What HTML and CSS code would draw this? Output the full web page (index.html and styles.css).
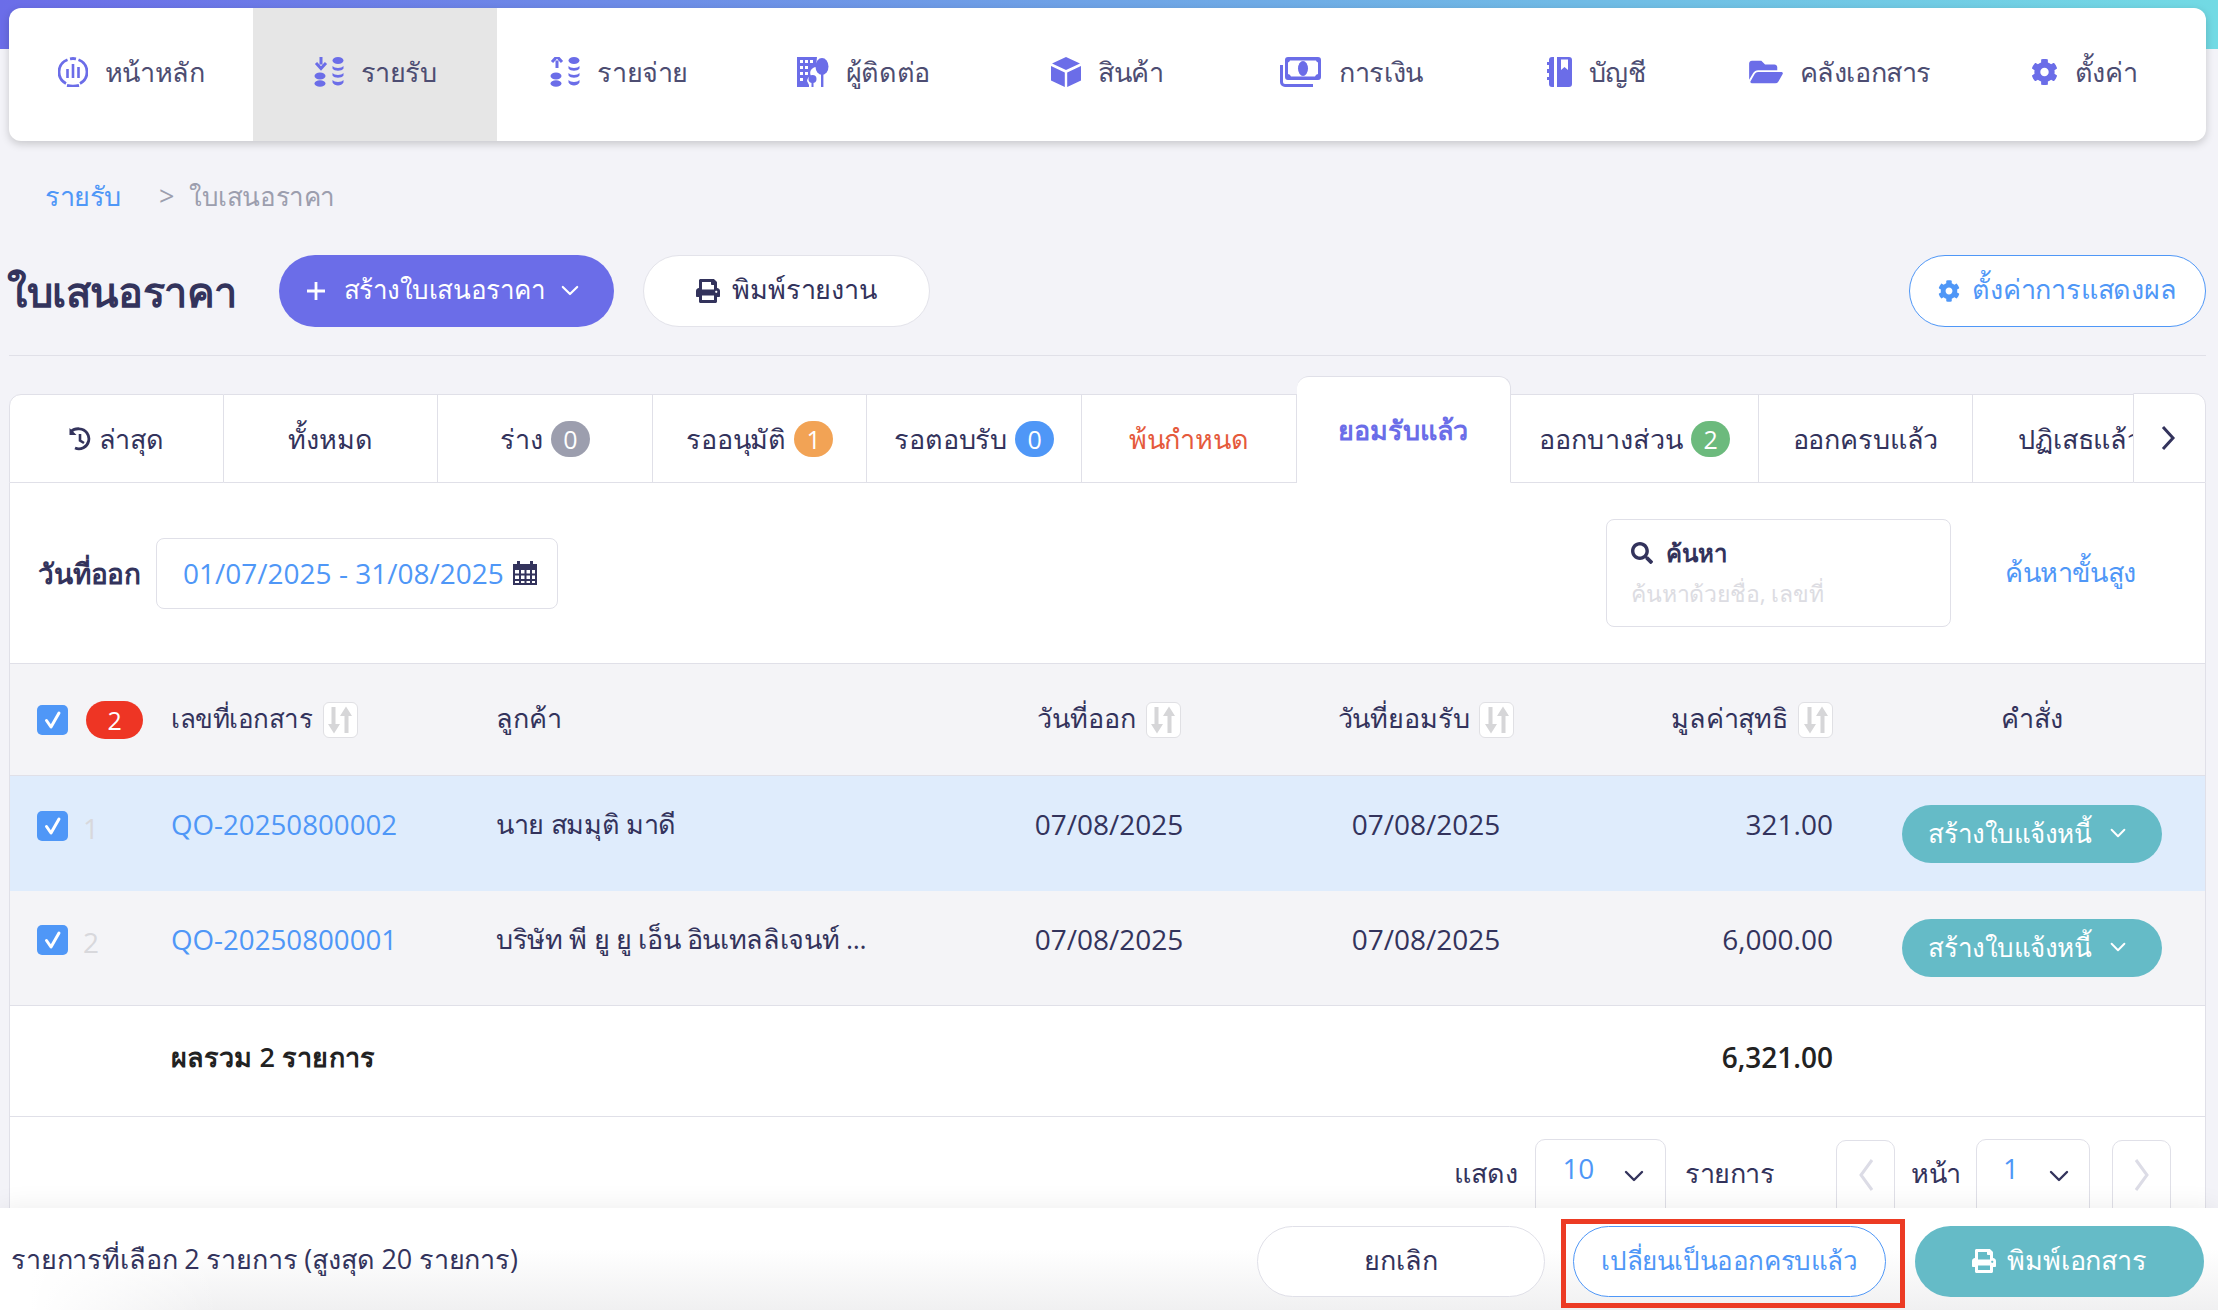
FILE: index.html
```html
<!DOCTYPE html>
<html lang="th">
<head>
<meta charset="utf-8">
<title>ใบเสนอราคา</title>
<link rel="stylesheet" href="styles.css">
</head>
<body>
<svg class="sprite" aria-hidden="true">
  <symbol id="i-cog" viewBox="0 0 512 512"><path d="M487.4 315.7l-42.6-24.6c4.3-23.2 4.3-47 0-70.2l42.6-24.6c4.9-2.8 7.1-8.6 5.5-14-11.1-35.6-30-67.8-54.7-94.6-3.8-4.1-10-5.1-14.8-2.3L380.8 110c-17.9-15.4-38.5-27.3-60.8-35.1V25.8c0-5.6-3.9-10.5-9.4-11.7-36.7-8.2-74.3-7.8-109.2 0-5.5 1.2-9.4 6.1-9.4 11.7V75c-22.2 7.9-42.8 19.8-60.8 35.1L88.7 85.5c-4.9-2.8-11-1.9-14.8 2.3-24.7 26.7-43.6 58.9-54.7 94.6-1.7 5.4.6 11.2 5.5 14L67.3 221c-4.3 23.2-4.3 47 0 70.2l-42.6 24.6c-4.9 2.8-7.1 8.6-5.5 14 11.1 35.6 30 67.8 54.7 94.6 3.8 4.1 10 5.1 14.8 2.3l42.6-24.6c17.9 15.4 38.5 27.3 60.8 35.1v49.2c0 5.6 3.9 10.5 9.4 11.7 36.7 8.2 74.3 7.8 109.2 0 5.5-1.2 9.4-6.1 9.4-11.7v-49.2c22.2-7.9 42.8-19.8 60.8-35.1l42.6 24.6c4.9 2.8 11 1.9 14.8-2.3 24.7-26.7 43.6-58.9 54.7-94.6 1.5-5.5-.7-11.3-5.6-14.1zM256 336c-44.1 0-80-35.9-80-80s35.9-80 80-80 80 35.9 80 80-35.9 80-80 80z"/></symbol>
  <symbol id="i-print" viewBox="0 0 512 512"><path d="M448 192V77.25c0-8.49-3.37-16.62-9.37-22.63L393.37 9.37c-6-6-14.14-9.37-22.63-9.37H96C78.33 0 64 14.33 64 32v160c-35.35 0-64 28.65-64 64v112c0 8.84 7.16 16 16 16h48v96c0 17.67 14.33 32 32 32h320c17.67 0 32-14.33 32-32v-96h48c8.84 0 16-7.16 16-16V256c0-35.35-28.65-64-64-64zm-64 256H128v-96h256v96zm0-224H128V64h192v48c0 8.84 7.16 16 16 16h48v96zm48 72c-13.25 0-24-10.75-24-24 0-13.26 10.75-24 24-24s24 10.74 24 24c0 13.25-10.75 24-24 24z"/></symbol>
  <symbol id="i-chev" viewBox="0 0 20 12"><path d="M2 2l8 8 8-8" fill="none" stroke="currentColor" stroke-width="2.4" stroke-linecap="round" stroke-linejoin="round"/></symbol>
  <symbol id="i-sort" viewBox="0 0 24 28"><path d="M7.500 1v17H12l-6 9.500L0 18h3.500V1zM16.500 27V10H12l6-9.500L24 10h-3.500v17z" fill="#d6d6d8"/></symbol>
  <symbol id="i-check" viewBox="0 0 31 30"><path d="M9.500 15.500l4.500 6.500 8-14" fill="none" stroke="#fff" stroke-width="3" stroke-linecap="round" stroke-linejoin="round"/></symbol>
  <symbol id="i-flow" viewBox="0 0 30 30"><path d="M7 0v7.500M2 6l5 5.500L12 6" fill="none" stroke="currentColor" stroke-width="3"/><g fill="currentColor"><ellipse cx="24" cy="3.500" rx="5.500" ry="3.500"/><ellipse cx="6" cy="19" rx="5.500" ry="3.500"/><ellipse cx="6" cy="26.500" rx="5.500" ry="3.200"/><path d="M18.500 9c2 2.500 9 2.500 11 0v2.500c-2 3-9 3-11 0zM18.500 16c2 2.500 9 2.500 11 0v2.500c-2 3-9 3-11 0zM18.500 23c2 2.500 9 2.500 11 0v2.500c-2 4-9 4-11 0z"/></g></symbol>
  <symbol id="i-flow-up" viewBox="0 0 30 30"><path d="M7 11V3.500M2 5l5-5.500L12 5" fill="none" stroke="currentColor" stroke-width="3"/><g fill="currentColor"><ellipse cx="24" cy="3.500" rx="5.500" ry="3.500"/><ellipse cx="6" cy="19" rx="5.500" ry="3.500"/><ellipse cx="6" cy="26.500" rx="5.500" ry="3.200"/><path d="M18.500 9c2 2.500 9 2.500 11 0v2.500c-2 3-9 3-11 0zM18.500 16c2 2.500 9 2.500 11 0v2.500c-2 3-9 3-11 0zM18.500 23c2 2.500 9 2.500 11 0v2.500c-2 4-9 4-11 0z"/></g></symbol>
</svg>

<div class="page">
  <header class="head">
    <nav class="nav">
      <a class="nav-item"><svg class="ico" width="30" height="30" viewBox="0 0 30 30"><path d="M9.500 2.800A13 13 0 0 0 8 26.500M22 26.500A13 13 0 0 0 20.500 2.800" fill="none" stroke="currentColor" stroke-width="2.800"/><path d="M9 28.300c4 1 8 1 12 0M12 1.800c2-.4 4-.4 6 0" fill="none" stroke="currentColor" stroke-width="2.800"/><path d="M9.500 12v9M15 7v14M20.500 10v11" stroke="currentColor" stroke-width="2.600"/></svg><span>หน้าหลัก</span></a>
      <a class="nav-item is-active"><svg class="ico" width="30" height="30"><use href="#i-flow"/></svg><span>รายรับ</span></a>
      <a class="nav-item"><svg class="ico" width="30" height="30"><use href="#i-flow-up"/></svg><span>รายจ่าย</span></a>
      <a class="nav-item"><svg class="ico" width="32" height="30" viewBox="0 0 32 30"><path fill="currentColor" fill-rule="evenodd" d="M0 0h20l-1 10a6 6 0 0 0-5 9 6 6 0 0 0-4 5l2 4v2H0zM3 3v3h3V3zm5 0v3h3V3zm5 0v3h3V3zM3 9v3h3V9zm5 0v3h3V9zM3 15v3h3v-3zm5 0v3h3v-3zM3 21v3h3v-3z"/><ellipse cx="25" cy="9.500" rx="6.500" ry="8.500" fill="currentColor"/><rect x="24" y="12" width="2.400" height="18" fill="currentColor"/><circle cx="15.500" cy="22" r="4" fill="currentColor"/><rect x="14.500" y="22" width="2" height="8" fill="currentColor"/></svg><span>ผู้ติดต่อ</span></a>
      <a class="nav-item"><svg class="ico" width="30" height="30" viewBox="0 0 30 30"><path fill="currentColor" d="M15 0l14 6.500L15 13 1 6.500zM0 9l13.800 6.500V30L0 23.500zM30 9l-13.800 6.500V30L30 23.500z"/></svg><span>สินค้า</span></a>
      <a class="nav-item"><svg class="ico" width="42" height="30" viewBox="0 0 42 30"><path fill="currentColor" fill-rule="evenodd" d="M8 0h30a3 3 0 0 1 3 3v17a3 3 0 0 1-3 3H8a3 3 0 0 1-3-3V3a3 3 0 0 1 3-3zm2 3.500a3 3 0 0 1-2 2V17a4 4 0 0 1 3 2.500h24a4 4 0 0 1 3-2.500V5.500a3 3 0 0 1-2-2z"/><ellipse cx="23" cy="11.500" rx="5" ry="7.500" fill="currentColor"/><path d="M1.500 8v17a3.500 3.500 0 0 0 3.500 3.500h28" fill="none" stroke="currentColor" stroke-width="3"/></svg><span>การเงิน</span></a>
      <a class="nav-item"><svg class="ico" width="26" height="30" viewBox="0 0 26 30"><path fill="currentColor" d="M11 0h12a3 3 0 0 1 3 3v24a3 3 0 0 1-3 3H11zM8 0v30H6a3 3 0 0 1-3-3v-4H1v-3h2v-4H1v-4h2V8H1V5h2V3a3 3 0 0 1 3-3z"/><path fill="#fff" d="M15 2.500h7V13l-3.500-3-3.500 3z"/></svg><span>บัญชี</span></a>
      <a class="nav-item"><svg class="ico" width="34" height="30" viewBox="0 0 576 512"><path fill="currentColor" d="M572.694 292.093L500.27 416.248A63.997 63.997 0 0 1 444.989 448H45.025c-18.523 0-30.064-20.093-20.731-36.093l72.424-124.155A64 64 0 0 1 152 256h399.964c18.523 0 30.064 20.093 20.73 36.093zM152 224h328v-48c0-26.51-21.49-48-48-48H272l-64-64H48C21.49 64 0 85.49 0 112v278.046l69.077-118.418C86.214 242.25 117.989 224 152 224z"/></svg><span>คลังเอกสาร</span></a>
      <a class="nav-item"><svg class="ico" width="27" height="30" fill="currentColor"><use href="#i-cog"/></svg><span>ตั้งค่า</span></a>
    </nav>
  </header>

  <div class="crumbs"><a class="crumb-link">รายรับ</a><span class="crumb-sep">&gt;</span><span class="crumb-cur">ใบเสนอราคา</span></div>

  <div class="title-row">
    <h1 class="title">ใบเสนอราคา</h1>
    <button class="btn btn-primary"><svg class="plus" width="20" height="20" viewBox="0 0 20 20"><path d="M10 1v18M1 10h18" stroke="#fff" stroke-width="2.800"/></svg><span>สร้างใบเสนอราคา</span><svg class="chev" width="18" height="11"><use href="#i-chev"/></svg></button>
    <button class="btn btn-plain"><svg width="24" height="24" fill="#33335c"><use href="#i-print"/></svg><span>พิมพ์รายงาน</span></button>
    <button class="btn btn-outline"><svg width="22" height="24" fill="#4f97f7"><use href="#i-cog"/></svg><span>ตั้งค่าการแสดงผล</span></button>
  </div>

  <section class="panel">
    <div class="tabs">
      <div class="tab-list">
        <a class="tab"><svg width="22" height="24" viewBox="0 0 22 24"><path d="M2 4.500C4 2.600 7 1.500 10.500 1.800A10 10 0 1 1 6 21" fill="none" stroke="#33335c" stroke-width="2.800"/><path d="M0.500 1v7h7" fill="#33335c"/><path d="M11 7v6.500l4 2.500" fill="none" stroke="#33335c" stroke-width="2.600"/></svg><span>ล่าสุด</span></a>
        <a class="tab"><span>ทั้งหมด</span></a>
        <a class="tab"><span>ร่าง</span><i class="pill pill-gray">0</i></a>
        <a class="tab"><span>รออนุมัติ</span><i class="pill pill-orange">1</i></a>
        <a class="tab"><span>รอตอบรับ</span><i class="pill pill-blue">0</i></a>
        <a class="tab tab-danger"><span>พ้นกำหนด</span></a>
        <a class="tab tab-active"><span>ยอมรับแล้ว</span></a>
        <a class="tab tab-wide"><span>ออกบางส่วน</span><i class="pill pill-green">2</i></a>
        <a class="tab"><span>ออกครบแล้ว</span></a>
        <a class="tab"><span>ปฏิเสธแล้ว</span></a>
      </div>
      <a class="tab-next"><svg width="16" height="26" viewBox="0 0 16 26"><path d="M3 2l10 11L3 24" fill="none" stroke="#33335c" stroke-width="3"/></svg></a>
    </div>

    <div class="filters">
      <label class="filter-label">วันที่ออก</label>
      <div class="date-box"><span>01/07/2025 - 31/08/2025</span><svg width="24" height="24" viewBox="0 0 24 24"><path fill="#33335c" fill-rule="evenodd" d="M0 3h4V0h3v3h10V0h3v3h4v21H0zM2 9v3.500h4V9zm6 0v3.500h3.500V9zm5.500 0v3.500H17V9zm5.500 0v3.500h3V9zM2 14.500V18h4v-3.500zm6 0V18h3.500v-3.500zm5.500 0V18H17v-3.500zm5.500 0V18h3v-3.500zM8 20v2h3.500v-2zm5.500 0v2H17v-2zM2 20v2h4v-2zm17 0v2h3v-2z"/></svg></div>
      <div class="search-box">
        <div class="search-head"><svg width="22" height="22" viewBox="0 0 512 512"><path fill="#33335c" d="M505 442.7L405.3 343c-4.500-4.500-10.600-7-17-7H372c27.600-35.300 44-79.700 44-128C416 93.100 322.900 0 208 0S0 93.100 0 208s93.100 208 208 208c48.300 0 92.700-16.400 128-44v16.300c0 6.400 2.500 12.500 7 17l99.700 99.700c9.400 9.400 24.600 9.400 33.900 0l28.300-28.300c9.400-9.400 9.400-24.600.1-34zM208 336c-70.700 0-128-57.200-128-128 0-70.700 57.200-128 128-128 70.700 0 128 57.200 128 128 0 70.700-57.200 128-128 128z"/></svg><b>ค้นหา</b></div>
        <div class="search-hint">ค้นหาด้วยชื่อ, เลขที่</div>
      </div>
      <a class="adv-link">ค้นหาขั้นสูง</a>
    </div>

    <div class="row row-head">
      <div class="cell-sel"><span class="check"><svg width="31" height="30"><use href="#i-check"/></svg></span><span class="count">2</span></div>
      <div class="th th-doc">เลขที่เอกสาร<span class="sort"><svg width="24" height="28"><use href="#i-sort"/></svg></span></div>
      <div class="th">ลูกค้า</div>
      <div class="th th-center">วันที่ออก<span class="sort"><svg width="24" height="28"><use href="#i-sort"/></svg></span></div>
      <div class="th th-center">วันที่ยอมรับ<span class="sort"><svg width="24" height="28"><use href="#i-sort"/></svg></span></div>
      <div class="th th-right">มูลค่าสุทธิ<span class="sort"><svg width="24" height="28"><use href="#i-sort"/></svg></span></div>
      <div class="th th-center th-cmd">คำสั่ง</div>
    </div>

    <div class="row row-selected">
      <div class="cell-sel cell-up"><span class="check"><svg width="31" height="30"><use href="#i-check"/></svg></span><span class="num">1</span></div>
      <div class="td td-link">QO-20250800002</div>
      <div class="td td-name">นาย สมมุติ มาดี</div>
      <div class="td td-center">07/08/2025</div>
      <div class="td td-center">07/08/2025</div>
      <div class="td td-right">321.00</div>
      <div class="cmd"><button class="btn-row"><span>สร้างใบแจ้งหนี้</span><svg width="16" height="10"><use href="#i-chev"/></svg></button></div>
    </div>
    <div class="row row-plain">
      <div class="cell-sel cell-up"><span class="check"><svg width="31" height="30"><use href="#i-check"/></svg></span><span class="num">2</span></div>
      <div class="td td-link">QO-20250800001</div>
      <div class="td td-name">บริษัท พี ยู ยู เอ็น อินเทลลิเจนท์ ...</div>
      <div class="td td-center">07/08/2025</div>
      <div class="td td-center">07/08/2025</div>
      <div class="td td-right">6,000.00</div>
      <div class="cmd"><button class="btn-row"><span>สร้างใบแจ้งหนี้</span><svg width="16" height="10"><use href="#i-chev"/></svg></button></div>
    </div>
    <div class="row row-total">
      <div></div>
      <div class="total-label">ผลรวม 2 รายการ</div>
      <div></div><div></div><div></div>
      <div class="total-value">6,321.00</div>
      <div></div>
    </div>

    <div class="pager">
      <span class="pager-text">แสดง</span>
      <div class="select select-size"><span>10</span><svg width="20" height="12"><use href="#i-chev"/></svg></div>
      <span class="pager-text pager-items">รายการ</span>
      <a class="page-btn"><svg width="16" height="34" viewBox="0 0 16 34"><path d="M14 2L3 17l11 15" fill="none" stroke="#dcdce6" stroke-width="3"/></svg></a>
      <span class="pager-text pager-page">หน้า</span>
      <div class="select select-page"><span>1</span><svg width="20" height="12"><use href="#i-chev"/></svg></div>
      <a class="page-btn page-next"><svg width="16" height="34" viewBox="0 0 16 34"><path d="M2 2l11 15L2 32" fill="none" stroke="#dcdce6" stroke-width="3"/></svg></a>
    </div>
  </section>
</div>

<footer class="bar">
  <span class="bar-text">รายการที่เลือก 2 รายการ (สูงสุด 20 รายการ)</span>
  <button class="btn btn-cancel">ยกเลิก</button>
  <div class="convert-wrap">
    <button class="btn btn-convert">เปลี่ยนเป็นออกครบแล้ว</button>
    <span class="highlight"></span>
  </div>
  <button class="btn btn-teal"><svg width="24" height="24" fill="#fff"><use href="#i-print"/></svg><span>พิมพ์เอกสาร</span></button>
</footer>
</body>
</html>
```
FILE: styles.css
```css
* { box-sizing: border-box; }
html, body { margin: 0; padding: 0; }
body {
  width: 2218px;
  height: 1310px;
  overflow: hidden;
  display: flex;
  flex-direction: column;
  background: #f3f3f8;
  color: #33335c;
  font-family: "Open Sans", "Noto Sans", sans-serif;
  font-size: 27px;
  letter-spacing: -.15px;
  line-height: 40px;
}
.sprite { display: none; }
button { font: inherit; letter-spacing: inherit; cursor: pointer; }
i { font-style: normal; }
.page { flex: 1; min-height: 0; overflow: hidden; }

.head {
  padding: 8px 12px 0 9px;
  background: linear-gradient(90deg, #6b6de8, #72dae4) no-repeat;
  background-size: 100% 49px;
}
.nav {
  display: flex;
  height: 133px;
  background: #fff;
  border-radius: 12px;
  overflow: hidden;
  box-shadow: 0 3px 8px rgba(0, 0, 0, .18);
}
.nav-item {
  flex: 1;
  display: flex;
  align-items: center;
  justify-content: center;
  gap: 17px;
  padding-bottom: 5px;
  color: #4d4d72;
  letter-spacing: -.4px;
}
.nav-item .ico { color: #6b6de8; flex: none; }
.is-active { background: #e6e6e6; }

.crumbs { display: flex; align-items: center; margin: 35px 0 0 45px; height: 40px; letter-spacing: -.4px; }
.crumb-link { color: #4f97f7; }
.crumb-sep { color: #9c9eae; margin: 0 15px 0 38px; }
.crumb-cur { color: #9c9eae; font-size: 26px; }

.title-row {
  display: flex;
  align-items: center;
  margin: 39px 12px 0 9px;
  padding-bottom: 28px;
  border-bottom: 1px solid #e0e0e8;
}
.title { margin: 0 46px 0 -2px; font-size: 41.5px; line-height: 72px; font-weight: 600; width: 226px; white-space: nowrap; letter-spacing: -.4px; }
.btn {
  display: flex;
  align-items: center;
  justify-content: center;
  height: 72px;
  border-radius: 36px;
  border: 1px solid transparent;
  gap: 12px;
  padding: 0 0 4px;
  color: #33335c;
  background: #fff;
}
.btn svg { margin-top: 3px; }
.btn-primary { width: 335px; background: #6b6de8; color: #fff; margin-right: 29px; font-size: 26px; letter-spacing: -.45px; padding-right: 8px; gap: 14px; }
.btn-primary .plus { margin-right: 4px; }
.btn-primary .chev { color: #fff; margin-left: 2px; }
.btn-plain { width: 287px; border-color: #e3e3ea; }
.btn-outline { width: 297px; margin-left: auto; border-color: #4f97f7; color: #4f97f7; letter-spacing: -.2px; }

.panel {
  margin: 20px 12px 0 9px;
  background: #fff;
  border-left: 1px solid #e0e0e8;
  border-right: 1px solid #e0e0e8;
}
.tabs { display: flex; align-items: flex-end; height: 107px; background: #f3f3f8; margin: 0 -1px; }
.tab-list { display: flex; align-items: flex-end; width: 2124px; height: 107px; overflow: hidden; flex: none; }
.tab {
  flex: none;
  display: flex;
  align-items: center;
  justify-content: center;
  gap: 8px;
  width: 214.6px;
  height: 89px;
  background: #fff;
  border: 1px solid #e0e0e8;
  border-left: 0;
  white-space: nowrap;
}
.tab:first-child { border-left: 1px solid #e0e0e8; border-top-left-radius: 12px; }
.tab-danger { color: #e55a3c; }
.tab-wide { width: 247.5px; letter-spacing: .3px; }
.tab-active {
  height: 107px;
  color: #6b6de8;
  font-weight: 600;
  border-bottom-color: #fff;
  border-top-left-radius: 12px;
  border-top-right-radius: 12px;
}
.tab-next {
  flex: 1;
  display: flex;
  align-items: center;
  justify-content: center;
  height: 90px;
  background: #fff;
  border: 1px solid #e0e0e8;
  border-top-right-radius: 12px;
  padding-right: 4px;
}
.pill {
  display: flex;
  align-items: center;
  justify-content: center;
  width: 39px;
  height: 36px;
  border-radius: 18px;
  color: #fff;
  font-size: 25px;
}
.pill-gray { background: #9c9eae; }
.pill-orange { background: #f2a355; }
.pill-blue { background: #4f97f7; }
.pill-green { background: #6cba7d; }

.filters {
  display: flex;
  align-items: center;
  height: 181px;
  padding: 0 72px 0 28px;
  border-bottom: 1px solid #e0e0e8;
}
.filter-label { font-weight: 600; font-size: 28px; width: 118px; white-space: nowrap; }
.date-box {
  display: flex;
  align-items: center;
  gap: 9px;
  width: 402px;
  height: 71px;
  padding-left: 26px;
  border: 1px solid #e0e0e8;
  border-radius: 8px;
  color: #4f97f7;
  white-space: nowrap;
  font-size: 28px;
  letter-spacing: 0;
}
.search-box {
  width: 345px;
  height: 108px;
  margin-left: auto;
  padding: 13px 24px 0;
  border: 1px solid #e0e0e8;
  border-radius: 8px;
}
.search-head { display: flex; align-items: center; gap: 13px; height: 40px; font-size: 24px; }
.search-head b { font-weight: 600; }
.search-hint { margin-top: 0; color: #dcdce2; font-size: 23px; white-space: nowrap; }
.adv-link { width: 128px; margin-left: 54px; color: #4f97f7; white-space: nowrap; padding-bottom: 3px; letter-spacing: -.4px; }

.row {
  display: grid;
  grid-template-columns: 134px 325px 495px 236px 398px 208px 1fr;
  align-items: center;
  padding-left: 27px;
  white-space: nowrap;
}
.row-head { background: #f4f4f7; border-bottom: 1px solid #e0e0e8; height: 112px; }
.row-selected { height: 115px; background: #dfecfc; }
.row-plain { height: 115px; background: #f4f4f7; border-bottom: 1px solid #e0e0e8; }
.row-total { height: 111px; border-bottom: 1px solid #e0e0e8; }
.cell-sel { display: flex; align-items: center; }
.cell-up { padding-bottom: 16px; }
.check { display: block; width: 31px; height: 30px; border-radius: 5px; background: #4f97f7; }
.check svg { display: block; }
.count {
  display: flex;
  align-items: center;
  justify-content: center;
  width: 57px;
  height: 38px;
  margin-left: 18px;
  border-radius: 19px;
  background: #ee3524;
  color: #fff;
  font-size: 25px;
}
.num { margin: 4px 0 0 15px; color: #d8d8dc; font-size: 28px; }
.th { display: flex; align-items: center; padding-bottom: 3px; }
.th-doc { font-size: 26px; letter-spacing: -.45px; }
.th-center { justify-content: center; }
.th-right { justify-content: flex-end; }
.th-cmd { padding-left: 26px; }
.sort {
  display: flex;
  align-items: center;
  justify-content: center;
  width: 35px;
  height: 36px;
  margin: 0 0 -3px 10px;
  background: #fff;
  border: 1px solid #e0e0e4;
  border-radius: 6px;
}
.td { padding-bottom: 19px; font-size: 28px; letter-spacing: 0; }
.td-name { font-size: 27px; letter-spacing: -.35px; }
.td-link { color: #4f97f7; font-size: 27.7px; }
.td-center { text-align: center; }
.td-right { text-align: right; }
.cmd { display: flex; justify-content: center; padding-left: 26px; }
.btn-row {
  display: flex;
  align-items: center;
  justify-content: center;
  gap: 18px;
  width: 260px;
  height: 58px;
  padding: 0 10px 2px 0;
  border: 0;
  border-radius: 29px;
  background: #65bbc7;
  color: #fff;
  font-size: 26px;
  letter-spacing: -.45px;
}
.total-label, .total-value { color: #222; font-weight: 600; padding-bottom: 9px; }
.total-label { letter-spacing: .1px; }
.total-value { text-align: right; font-size: 28px; letter-spacing: 0; }

.pager {
  display: flex;
  align-items: flex-start;
  justify-content: flex-end;
  height: 200px;
  padding: 22px 34px 0 0;
}
.pager-text { margin-top: 14px; }
.pager-items { margin: 14px 62px 0 19px; letter-spacing: -.5px; }
.pager-page { margin: 14px 16px 0 16px; letter-spacing: -.8px; }
.select {
  display: flex;
  align-items: flex-start;
  height: 90px;
  border: 1px solid #e0e0e8;
  border-radius: 10px;
  color: #4f97f7;
  font-size: 28px;
}
.select span { margin-top: 8px; }
.select svg { color: #33335c; margin-top: 30px; }
.select-size { width: 131px; margin-left: 18px; padding-left: 26px; gap: 30px; }
.select-page { width: 114px; padding-left: 26px; gap: 30px; }
.page-btn {
  display: flex;
  justify-content: center;
  width: 59px;
  height: 90px;
  margin-top: 1px;
  padding-top: 17px;
  border: 1px solid #e0e0e8;
  border-radius: 10px;
}
.page-next { margin-left: 22px; }

.bar {
  position: relative;
  flex: none;
  display: flex;
  align-items: center;
  height: 102px;
  padding: 18px 14px 13px 11px;
  background:
    linear-gradient(90deg, #fff 30px, rgba(255, 255, 255, 0) 220px),
    linear-gradient(180deg, #fff 40%, #f0f0f1);
  box-shadow: 0 0 25px rgba(0, 0, 0, .08);
}
.bar-text { white-space: nowrap; padding-bottom: 6px; }
.btn-cancel { width: 288px; height: 71px; margin-left: auto; border-color: #e0e0e8; }
.convert-wrap { position: relative; margin: 0 29px 0 28px; }
.btn-convert { width: 313px; height: 71px; border-color: #4f97f7; color: #4f97f7; font-size: 26px; letter-spacing: -.4px; }
.highlight {
  position: absolute;
  left: -12px;
  right: -19px;
  top: -7px;
  bottom: -11px;
  border: 5px solid #ec3b24;
}
.btn-teal { width: 289px; height: 71px; background: #65bbc7; color: #fff; gap: 11px; }
```
